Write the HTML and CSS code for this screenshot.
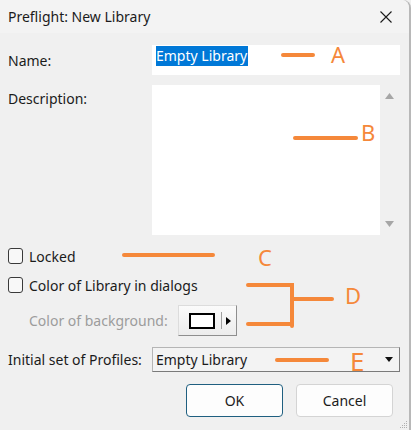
FILE: index.html
```html
<!DOCTYPE html>
<html>
<head>
<meta charset="utf-8">
<link rel="stylesheet" href="styles.css">
</head>
<body>
<div class="dialog">
  <div class="titlebar">
    <span class="title">Preflight: New Library</span>
    <svg class="close" width="12" height="12" viewBox="0 0 12 12"><path d="M0.5 0.5 L11.5 11.5 M11.5 0.5 L0.5 11.5" stroke="#1a1a1a" stroke-width="1.1" fill="none"/></svg>
  </div>
  <div class="body">
    <div class="row">
      <span class="label label-name">Name:</span>
      <div class="input"><span class="sel">Empty Library</span></div>
    </div>
    <div class="row row-desc">
      <span class="label label-desc">Description:</span>
      <div class="textarea">
        <div class="ta-text"></div>
        <div class="scroll">
          <svg width="9" height="6" viewBox="0 0 9 6"><path d="M0 6 L4.5 0 L9 6 Z" fill="#a6a6a6"/></svg>
          <svg width="9" height="6" viewBox="0 0 9 6"><path d="M0 0 L4.5 6 L9 0 Z" fill="#a6a6a6"/></svg>
        </div>
      </div>
    </div>
    <div class="check check-1"><span class="box"></span><span>Locked</span></div>
    <div class="check check-2"><span class="box"></span><span>Color of Library in dialogs</span></div>
    <div class="color-row">
      <span class="label-disabled">Color of background:</span>
      <div class="color-btn">
        <span class="swatch"></span>
        <span class="divider"></span>
        <svg width="5" height="8" viewBox="0 0 5 8"><path d="M0 0 L5 4 L0 8 Z" fill="#000"/></svg>
      </div>
    </div>
    <div class="row row-combo">
      <span class="label">Initial set of Profiles:</span>
      <div class="combo">
        <span>Empty Library</span>
        <svg width="8" height="5" viewBox="0 0 8 5"><path d="M0 0 L8 0 L4 5 Z" fill="#111"/></svg>
      </div>
    </div>
    <div class="buttons">
      <div class="btn btn-ok">OK</div>
      <div class="btn btn-cancel">Cancel</div>
    </div>
  </div>
  <svg class="annot" width="411" height="430" viewBox="0 0 411 430">
    <g stroke="#f5883a" stroke-width="4" stroke-linecap="round" fill="none">
      <path d="M283 55 L313 55"/>
      <path d="M295 138 L356 138"/>
      <path d="M124 255 L213 255"/>
      <path d="M248 285 L292 285 L292 326"/>
      <path d="M292 299 L332 299"/>
      <path d="M248 324 L292 324"/>
      <path d="M277 360 L327 360"/>
    </g>
    <g fill="#f5883a" font-family="'Noto Sans', sans-serif" font-size="22">
      <text x="331" y="63">A</text>
      <text x="361" y="141">B</text>
      <text x="258" y="266">C</text>
      <text x="345" y="304">D</text>
      <text x="350" y="371" font-size="26">E</text>
    </g>
  </svg>
  <svg class="grip" width="9" height="9" viewBox="0 0 9 9">
    <g fill="#b0b0b0">
      <rect x="7" y="1" width="1" height="1"/>
      <rect x="5" y="3" width="1" height="1"/><rect x="7" y="3" width="1" height="1"/>
      <rect x="3" y="5" width="1" height="1"/><rect x="5" y="5" width="1" height="1"/><rect x="7" y="5" width="1" height="1"/>
      <rect x="1" y="7" width="1" height="1"/><rect x="3" y="7" width="1" height="1"/><rect x="5" y="7" width="1" height="1"/><rect x="7" y="7" width="1" height="1"/>
    </g>
  </svg>
</div>
</body>
</html>
```
FILE: styles.css
```css
* { box-sizing: border-box; }
html, body { margin: 0; padding: 0; background: #f0f0f0; }
body { width: 411px; height: 430px; overflow: hidden; font-family: "Noto Sans", "Open Sans", sans-serif; font-size: 14px; color: #1b1b1b; }

.dialog { position: relative; width: 411px; height: 430px; background: #f0f0f0; border-right: 2px solid #b8b8b8; border-top-right-radius: 8px; }

.titlebar { height: 33px; background: #f3f3f3; display: flex; align-items: center; justify-content: space-between; padding: 0 17px 0 8px; border-top-right-radius: 8px; }
.title { font-size: 14px; color: #1b1b1b; }
.close { display: block; }

.body { padding: 12px 9px 0 8px; }

.row { display: flex; align-items: center; }
.label { width: 144px; flex: none; }
.input { width: 248px; height: 30px; background: #fff; padding: 1px 4px; display: flex; align-items: flex-start; }
.sel { background: #0078d7; color: #fff; line-height: 20px; height: 20px; padding: 0 1px 0 0; }

.row-desc { margin-top: 10px; align-items: flex-start; }
.label-desc { padding-top: 4px; }
.textarea { width: 248px; height: 150px; display: flex; }
.ta-text { width: 228px; height: 150px; background: #fff; }
.scroll { width: 20px; height: 150px; background: #f0f0f0; display: flex; flex-direction: column; justify-content: space-between; align-items: center; padding: 8px 1px 8px 0; }
.scroll svg { display: block; }

.check { display: flex; align-items: center; height: 16px; }
.check-1 { margin-top: 13px; }
.check-2 { margin-top: 13px; }
.box { width: 15px; height: 16px; border: 1px solid #3a3a3a; border-radius: 3px; background: #f8f8f8; margin-right: 6px; flex: none; }

.color-row { display: flex; align-items: center; margin-top: 12px; padding-left: 21px; }
.label-disabled { color: #9c9c9c; width: 149px; flex: none; }
.color-btn { width: 59px; height: 31px; display: flex; align-items: center; padding-left: 10px; background: linear-gradient(#fbfbfb, #ececec); border: 1px solid #dcdcdc; border-right-color: #8e8e8e; border-bottom-color: #8e8e8e; }
.swatch { width: 26px; height: 16px; border: 2px solid #000; background: #fff; }
.divider { width: 1px; height: 17px; background: #a0a0a0; margin: 0 4px 0 6px; }
.color-btn svg { display: block; }

.row-combo { margin-top: 11px; }
.combo { width: 248px; height: 25px; background: #f3f3f3; border: 1px solid #b5b5b5; border-bottom-color: #7a7a7a; border-right-color: #7a7a7a; display: flex; align-items: center; justify-content: space-between; padding: 0 6px 0 3px; }
.combo svg { display: block; }

.buttons { display: flex; justify-content: flex-end; gap: 13px; margin-top: 12px; margin-right: 7px; }
.btn { width: 97px; height: 33px; border-radius: 4px; background: #fdfdfd; display: flex; align-items: center; justify-content: center; }
.btn-ok { border: 1px solid #1f5f80; }
.btn-cancel { border: 1px solid #d4d4d4; }

.annot { position: absolute; left: 0; top: 0; pointer-events: none; }
.grip { position: absolute; right: 1px; bottom: 1px; }
```
